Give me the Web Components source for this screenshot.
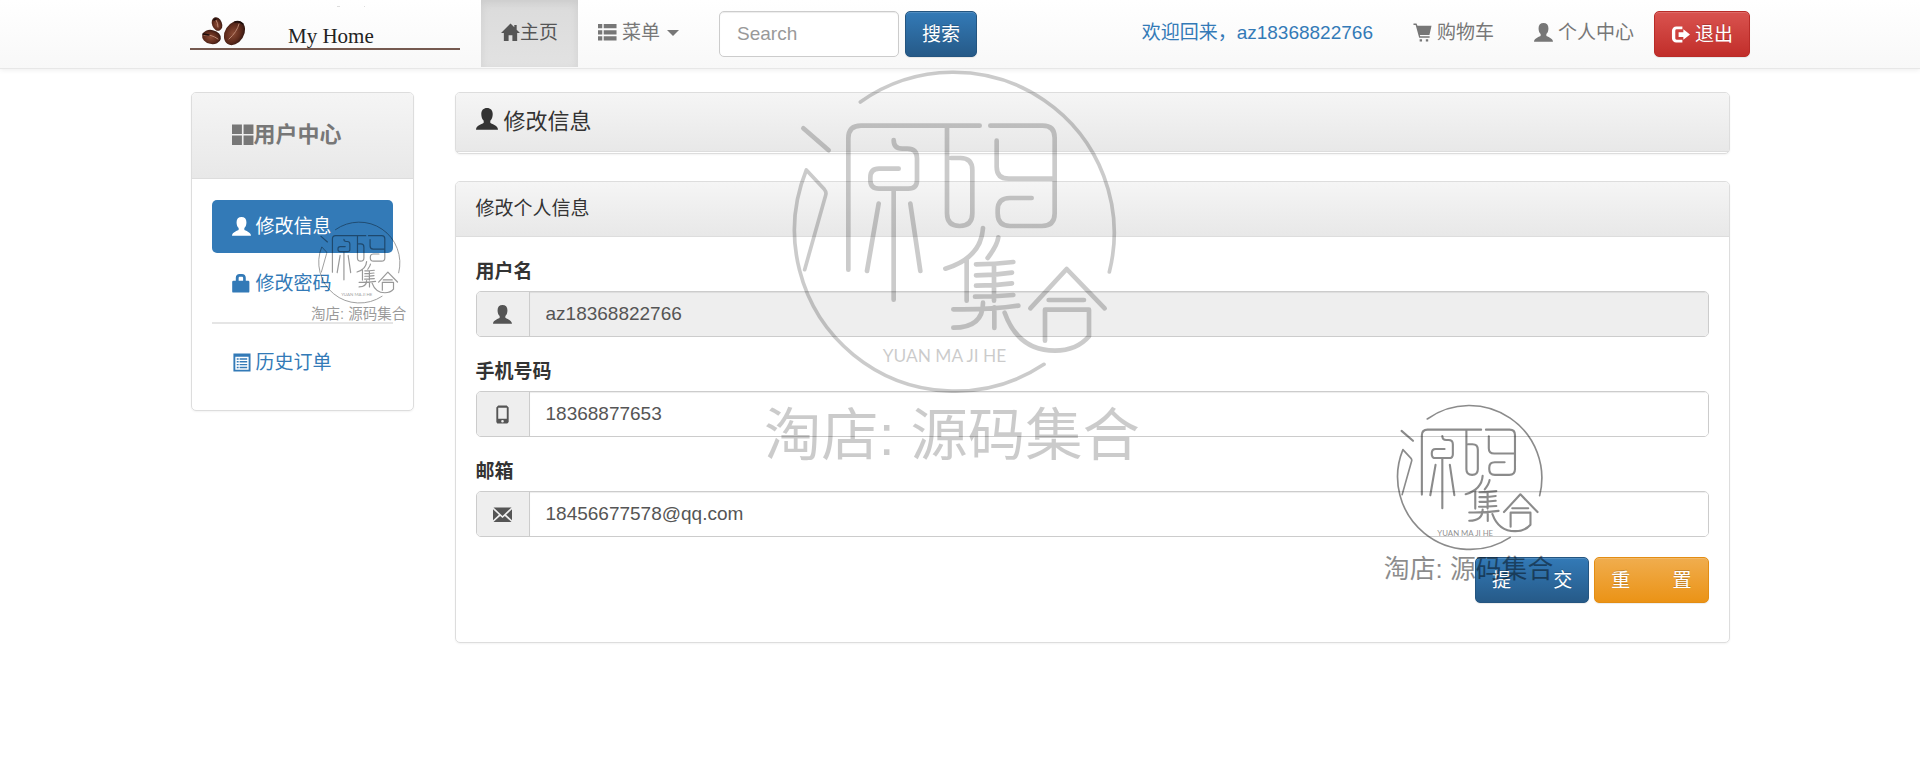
<!DOCTYPE html>
<html lang="zh-CN">
<head>
<meta charset="utf-8">
<title>My Home</title>
<style>
  body {
    margin: 0;
    min-height: 100vh;
    position: relative;
    background: #fff;
    color: #333;
    font-family: "Liberation Sans", "Noto Sans CJK SC", sans-serif;
    font-size: 19px;
    line-height: 27px;
  }
  main {
    max-width: 1539px;
    margin: 23px auto 0;
    padding: 0 20px;
    display: grid;
    grid-template-columns: 223px 1fr;
    gap: 41px;
    align-items: start;
  }
  .content {
    display: grid;
    gap: 27px;
  }
</style>
</head>
<body>
<top-navbar></top-navbar>

<main>
  <side-menu></side-menu>
  <div class="content">
    <page-title icon="user">修改信息</page-title>
    <info-panel>
      <span slot="heading">修改个人信息</span>
      <form-field label="用户名" icon="user" name="username" value="az18368822766" readonly></form-field>
      <form-field label="手机号码" icon="phone" name="phone" value="18368877653"></form-field>
      <form-field label="邮箱" icon="envelope" name="email" value="18456677578@qq.com"></form-field>
      <theme-button slot="actions" kind="primary">提&nbsp;&nbsp;&nbsp;&nbsp;&nbsp;&nbsp;&nbsp;&nbsp;交</theme-button>
      <theme-button slot="actions" kind="warning">重&nbsp;&nbsp;&nbsp;&nbsp;&nbsp;&nbsp;&nbsp;&nbsp;置</theme-button>
    </info-panel>
  </div>
</main>

<!-- stamps float over the page -->
<water-mark style="left: 760px; top: 60px; width: 390px; opacity: .2"></water-mark>
<water-mark style="left: 1382px; top: 400px; width: 176px; opacity: .45"></water-mark>
<water-mark style="left: 310px; top: 219px; width: 99px; opacity: .4"></water-mark>

<script>
const ICONS = {
  home: '<path d="M10 .5 0 10.5h3V19h5v-6h4v6h5v-8.500h3L16.500 7V2H14v2.500z"/>',
  list: '<path d="M0 1h4.500v4.500H0zM6 1h13.500v4.500H6zM0 7.500h4.500V12H0zM6 7.500h13.500V12H6zM0 14h4.500v4.500H0zM6 14h13.500v4.500H6z"/>',
  cart: '<path d="M.5.5h3.200l1 2.500h14.800l-2.200 9.500H7.200l.4 1.500h9.900v1.500H6.500L2.800 2H.5zM7 17h2.500v2.500H7zM13.500 17H16v2.500h-2.500z"/>',
  user: '<path d="M10 0c3.200 0 5.200 2 5.200 5.500 0 2.700-.8 4.800-2.200 6v2c.8 1.200 6.800 2.200 7 6.200H0c.2-4 6.200-5 7-6.200v-2c-1.400-1.200-2.200-3.300-2.200-6C4.800 2 6.800 0 10 0z"/>',
  logout: '<path d="M12 1.500H5.500A4.500 4.500 0 0 0 1 6v8a4.500 4.500 0 0 0 4.500 4.500H12v-3H6A1.500 1.500 0 0 1 4.500 14V6A1.500 1.500 0 0 1 6 4.500h6z"/><path d="M13 4.500 20 10l-7 5.500V12.500H8v-5h5z"/>',
  grid: '<path d="M0 .5h9v8.500H0zM10.500 .5h9v8.500h-9zM0 10.500h9v8.500H0zM10.500 10.500h9v8.500h-9z"/>',
  lock: '<path d="M4 7V4C4 1.500 5.500 0 8 0h2.500c2.500 0 4 1.500 4 4v3H17a1.300 1.300 0 0 1 1.300 1.300v10A1.300 1.300 0 0 1 17 19.600H1.500A1.300 1.300 0 0 1 .2 18.300v-10A1.300 1.300 0 0 1 1.500 7zM7 7h4.700V4.300c0-1-.5-1.500-1.500-1.500H8.500C7.500 2.800 7 3.300 7 4.300z"/>',
  orders: '<path fill-rule="evenodd" d="M1.500.5h18v19h-18zM3.500 4v13.500h14V4z"/><path d="M5 5.500h2V7H5zM8 5.500h8V7H8zM5 8.500h2V10H5zM8 8.500h8V10H8zM5 11.500h2V13H5zM8 11.500h8V13H8zM5 14.500h2V16H5zM8 14.500h8V16H8z"/>',
  phone: '<path fill-rule="evenodd" d="M5.500.5h9l2 2V18l-1.500 1.500H4.500L3.500 18V2.500zM5.500 3v11.500h9V3zM10 15.700a1.400 1.400 0 1 0 0 2.800 1.400 1.400 0 0 0 0-2.800z"/>',
  envelope: '<path d="M.5 2.500h19L10 11.500zM0 4.500 6.200 10.300 0 16zM20 4.500v11.500l-6.200-5.700zM.5 18l7-6.500 2.500 2.300 2.500-2.300 7 6.500z"/>'
};

class AppIcon extends HTMLElement {
  connectedCallback() {
    this.attachShadow({ mode: "open" }).innerHTML = `
      <style>
        :host { display: inline-block; width: 1em; height: 1em; flex: none; }
        svg { display: block; width: 100%; height: 100%; fill: currentColor; }
      </style>
      <svg viewBox="0 0 20 20" aria-hidden="true">${ICONS[this.getAttribute("name")]}</svg>
    `;
  }
}
customElements.define("app-icon", AppIcon);

class ThemeButton extends HTMLElement {
  connectedCallback() {
    this.attachShadow({ mode: "open" }).innerHTML = `
      <style>
        :host { display: block; --from: #337ab7; --to: #265a88; --edge: #245580; }
        :host([kind="danger"]) { --from: #d9534f; --to: #c12e2a; --edge: #b92c28; }
        :host([kind="warning"]) { --from: #f0ad4e; --to: #eb9316; --edge: #e38d13; }
        button {
          display: flex;
          align-items: center;
          gap: 5px;
          height: 46px;
          padding: 0 16px;
          border: 1px solid var(--edge);
          border-radius: 5px;
          background: linear-gradient(var(--from), var(--to));
          box-shadow: inset 0 1px 0 rgba(255,255,255,.15), 0 1px 1px rgba(0,0,0,.075);
          color: #fff;
          font: inherit;
          text-shadow: 0 -1px 0 rgba(0,0,0,.2);
          white-space: nowrap;
          cursor: pointer;
        }
      </style>
      <button type="button"><slot></slot></button>
    `;
  }
}
customElements.define("theme-button", ThemeButton);

class BrandLogo extends HTMLElement {
  connectedCallback() {
    this.attachShadow({ mode: "open" }).innerHTML = `
      <style>
        :host { display: block; width: 270px; height: 67px; }
        svg { display: block; }
      </style>
      <svg width="270" height="67" viewBox="0 0 270 67" role="img" aria-label="My Home">
        <defs>
          <radialGradient id="bean" cx=".45" cy=".55" r=".6">
            <stop offset="0" stop-color="#8a4a34"/>
            <stop offset=".6" stop-color="#5f2b1c"/>
            <stop offset="1" stop-color="#2c1410"/>
          </radialGradient>
        </defs>
        <g fill="url(#bean)">
          <ellipse cx="27" cy="24" rx="5" ry="7" transform="rotate(-22 27 24)"/>
          <ellipse cx="21.500" cy="37" rx="9.500" ry="7" transform="rotate(12 21.500 37)"/>
          <ellipse cx="44.500" cy="33" rx="9.500" ry="13" transform="rotate(32 44.500 33)"/>
        </g>
        <g fill="none" stroke="#b98672" stroke-width="1" stroke-linecap="round">
          <path d="M26 20q2 3 2 7"/>
          <path d="M14 35q7-1 14 4"/>
          <path d="M49 24q-2 8-10 15"/>
        </g>
        <g fill="none" stroke="#1c0c0a" stroke-width="1.500" stroke-linecap="round">
          <path d="M24 20l2-1M13 34l6 1M45 22q5-1 8 2"/>
        </g>
        <path d="M147 6.500h3M174 6.500h1" stroke="#ddd"/>
        <text x="98" y="43" font-family="Liberation Serif, serif" font-size="21" fill="#222">My Home</text>
        <path d="M0 49h270" stroke="#75594f" stroke-width="2"/>
      </svg>
    `;
  }
}
customElements.define("brand-logo", BrandLogo);

class TopNavbar extends HTMLElement {
  connectedCallback() {
    this.attachShadow({ mode: "open" }).innerHTML = `
      <style>
        :host {
          display: block;
          background: linear-gradient(#fff, #f8f8f8);
          border-bottom: 1px solid #e7e7e7;
          box-shadow: 0 1px 5px rgba(0,0,0,.075);
        }
        nav {
          max-width: 1560px;
          margin: 0 auto;
          padding-left: 20px;
          height: 68px;
          display: flex;
          align-items: flex-start;
          white-space: nowrap;
        }
        a { color: #777; text-decoration: none; }
        .brand { margin-right: 21px; }
        .item {
          display: flex;
          align-items: center;
          gap: 5px;
          height: 27px;
          padding: 19px 20px 21px;
        }
        .active {
          gap: 0;
          color: #555;
          background: linear-gradient(#dbdbdb, #e2e2e2);
          box-shadow: inset 0 3px 9px rgba(0,0,0,.075);
        }
        .welcome { color: #337ab7; }
        .caret {
          margin-left: 2px;
          border: 6px solid transparent;
          border-top-color: currentColor;
          border-bottom: 0;
        }
        form { display: flex; gap: 6px; padding: 11px 20px; }
        input {
          box-sizing: border-box;
          width: 180px;
          height: 46px;
          padding: 0 17px;
          border: 1px solid #ccc;
          border-radius: 5px;
          box-shadow: inset 0 1px 1px rgba(0,0,0,.075);
          font: inherit;
          color: #555;
        }
        input::placeholder { color: #999; }
        .right { display: flex; margin-left: auto; }
        .right theme-button { padding-top: 11px; }
      </style>
      <nav>
        <a class="brand" href="#"><brand-logo></brand-logo></a>
        <a class="item active" href="#"><app-icon name="home"></app-icon>主页</a>
        <a class="item" href="#"><app-icon name="list"></app-icon>菜单<span class="caret"></span></a>
        <form>
          <input type="text" placeholder="Search" aria-label="Search">
          <theme-button>搜索</theme-button>
        </form>
        <div class="right">
          <a class="item welcome" href="#">欢迎回来，az18368822766</a>
          <a class="item" href="#"><app-icon name="cart"></app-icon>购物车</a>
          <a class="item" href="#"><app-icon name="user"></app-icon>个人中心</a>
          <theme-button kind="danger"><app-icon name="logout"></app-icon>退出</theme-button>
        </div>
      </nav>
    `;
  }
}
customElements.define("top-navbar", TopNavbar);

class SideMenu extends HTMLElement {
  connectedCallback() {
    this.attachShadow({ mode: "open" }).innerHTML = `
      <style>
        :host {
          display: block;
          border: 1px solid #ddd;
          border-radius: 5px;
          box-shadow: 0 1px 2px rgba(0,0,0,.05);
          overflow: hidden;
        }
        h3 {
          display: flex;
          align-items: center;
          margin: 0;
          padding: 28px 40px 30px;
          border-bottom: 1px solid #ddd;
          background: linear-gradient(#f5f5f5, #e8e8e8);
          color: #777;
          font-size: 22px;
        }
        ul {
          display: grid;
          gap: 4px;
          margin: 0;
          padding: 21px 20px;
          list-style: none;
        }
        a {
          display: flex;
          align-items: center;
          gap: 5px;
          padding: 13px 20px;
          border-radius: 5px;
          color: #337ab7;
          text-decoration: none;
        }
        .active { background: #337ab7; color: #fff; }
        .divider { height: 2px; margin: 8px 0; background: #e5e5e5; }
      </style>
      <h3><app-icon name="grid"></app-icon>用户中心</h3>
      <ul>
        <li><a class="active" href="#"><app-icon name="user"></app-icon>修改信息</a></li>
        <li><a href="#"><app-icon name="lock"></app-icon>修改密码</a></li>
        <li class="divider"></li>
        <li><a href="#"><app-icon name="orders"></app-icon>历史订单</a></li>
      </ul>
    `;
  }
}
customElements.define("side-menu", SideMenu);

class PageTitle extends HTMLElement {
  connectedCallback() {
    this.attachShadow({ mode: "open" }).innerHTML = `
      <style>
        :host {
          display: block;
          padding-bottom: 1px;
          border: 1px solid #ddd;
          border-radius: 5px;
          box-shadow: 0 1px 2px rgba(0,0,0,.05);
        }
        h3 {
          display: flex;
          align-items: flex-start;
          gap: 6px;
          margin: 0;
          padding: 15px 20px 16px;
          border-bottom: 1px solid #ddd;
          border-radius: 4px 4px 0 0;
          background: linear-gradient(#f5f5f5, #e8e8e8);
          font-size: 22px;
          font-weight: 400;
        }
      </style>
      <h3><app-icon name="${this.getAttribute("icon")}"></app-icon><slot></slot></h3>
    `;
  }
}
customElements.define("page-title", PageTitle);

class InfoPanel extends HTMLElement {
  connectedCallback() {
    this.attachShadow({ mode: "open" }).innerHTML = `
      <style>
        :host {
          display: block;
          border: 1px solid #ddd;
          border-radius: 5px;
          box-shadow: 0 1px 2px rgba(0,0,0,.05);
        }
        header {
          padding: 13px 20px 14px;
          border-bottom: 1px solid #ddd;
          border-radius: 4px 4px 0 0;
          background: linear-gradient(#f5f5f5, #e8e8e8);
        }
        form {
          display: grid;
          gap: 20px;
          padding: 20px 20px 39px;
        }
        .actions {
          display: flex;
          justify-content: flex-end;
          gap: 5px;
        }
      </style>
      <header><slot name="heading"></slot></header>
      <form>
        <slot></slot>
        <div class="actions"><slot name="actions"></slot></div>
      </form>
    `;
  }
}
customElements.define("info-panel", InfoPanel);

class FormField extends HTMLElement {
  connectedCallback() {
    const name = this.getAttribute("name");
    const readonly = this.hasAttribute("readonly") ? "readonly" : "";
    this.attachShadow({ mode: "open" }).innerHTML = `
      <style>
        :host { display: block; }
        label { display: block; padding: 1px 0 6px; font-weight: 700; }
        .group {
          display: flex;
          height: 44px;
          border: 1px solid #ccc;
          border-radius: 5px;
          overflow: hidden;
          color: #555;
        }
        .addon {
          display: flex;
          align-items: center;
          justify-content: center;
          width: 52px;
          border-right: 1px solid #ccc;
          background: #eee;
        }
        input {
          flex: 1;
          min-width: 0;
          padding: 0 16px 2px;
          border: 0;
          background: #fff;
          box-shadow: inset 0 1px 1px rgba(0,0,0,.075);
          color: inherit;
          font: inherit;
        }
        input:read-only { background: #eee; }
      </style>
      <label for="${name}">${this.getAttribute("label")}</label>
      <div class="group">
        <span class="addon"><app-icon name="${this.getAttribute("icon")}"></app-icon></span>
        <input id="${name}" name="${name}" type="text" value="${this.getAttribute("value")}" ${readonly}>
      </div>
    `;
  }
}
customElements.define("form-field", FormField);

class WaterMark extends HTMLElement {
  connectedCallback() {
    this.attachShadow({ mode: "open" }).innerHTML = `
      <style>
        :host { display: block; position: absolute; pointer-events: none; }
        svg { display: block; width: 100%; overflow: visible; }
        .ring { stroke-width: 11; }
        .sign { stroke-width: 14; }
      </style>
      <svg viewBox="0 0 1170 1260">
        <g fill="none" stroke="#000" stroke-linecap="round" stroke-linejoin="round">
          <g class="ring">
            <path d="M301 126A482 482 0 0 1 1048 636"/>
            <path d="M852 913A482 482 0 0 1 139 330L193 388Q200 396 197 406L134 629"/>
          </g>
          <g class="sign">
            <path d="M130 205 206 271"/>
            <path d="M265 629V235Q265 197 303 197H659"/>
            <path d="M401 240Q401 266 427 266H442Q471 266 471 295V360Q471 386 445 386H357Q331 386 331 360V353Q331 326 357 326H416"/>
            <path d="M401 390V719M356 431 321 633M451 431 481 633"/>
            <path d="M561 200V460Q561 498 599 498T637 460V330Q637 294 601 294H573"/>
            <path d="M691 197H848Q884 197 884 233V460Q884 498 846 498H750Q713 498 713 460V450Q713 414 750 414H815"/>
            <path d="M710 242V320Q710 356 746 356H880"/>
            <path d="M669 504Q663 594 556 626M715 532Q712 556 683 594M620 600V722"/>
            <path d="M648 613Q704 613 760 606M648 646Q704 646 756 638M648 677Q704 677 756 670M645 710Q704 710 760 705M702 615V722"/>
            <path d="M580 748Q690 750 775 737M669 728Q669 803 580 803M703 742V804"/>
            <path d="M734 758Q775 872 885 872Q950 872 987 829V749H855V842"/>
            <path d="M811 745 920 627 1034 745M866 720H972"/>
          </g>
        </g>
        <text x="368" y="905" font-family="Lato, sans-serif" font-size="52">YUAN MA JI HE</text>
        <text x="12" y="1184" font-family="Liberation Sans, Noto Sans CJK SC, sans-serif" font-size="172">淘店: 源码集合</text>
      </svg>
    `;
  }
}
customElements.define("water-mark", WaterMark);
</script>
</body>
</html>
